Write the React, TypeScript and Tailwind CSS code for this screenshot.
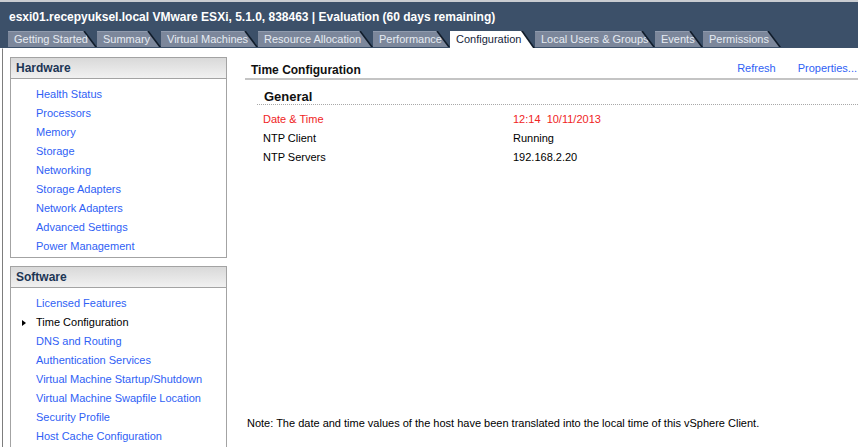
// vSphere Client — host Configuration tab, Time Configuration page

const TABS = [
  { label: "Getting Started", w: "w-[89px]", inner: "w-[87px]" },
  { label: "Summary", w: "w-[64px]", inner: "w-[62px]" },
  { label: "Virtual Machines", w: "w-[97px]", inner: "w-[95px]" },
  { label: "Resource Allocation", w: "w-[115px]", inner: "w-[113px]" },
  { label: "Performance", w: "w-[77px]", inner: "w-[75px]" },
  { label: "Configuration", w: "w-[85px]", inner: "w-[83px]", active: true },
  { label: "Local Users & Groups", w: "w-[120px]", inner: "w-[118px]" },
  { label: "Events", w: "w-[48px]", inner: "w-[46px]" },
  { label: "Permissions", w: "w-[78px]", inner: "w-[76px]" },
];

const HARDWARE = [
  "Health Status",
  "Processors",
  "Memory",
  "Storage",
  "Networking",
  "Storage Adapters",
  "Network Adapters",
  "Advanced Settings",
  "Power Management",
];

const SOFTWARE = [
  "Licensed Features",
  "Time Configuration",
  "DNS and Routing",
  "Authentication Services",
  "Virtual Machine Startup/Shutdown",
  "Virtual Machine Swapfile Location",
  "Security Profile",
  "Host Cache Configuration",
];

const ROWS = [
  { label: "Date & Time", value: "12:14  10/11/2013", red: true },
  { label: "NTP Client", value: "Running" },
  { label: "NTP Servers", value: "192.168.2.20" },
];

function Tab({ label, w, inner, active }: { label: string; w: string; inner: string; active?: boolean }) {
  return (
    <div
      className={`${w} ${active ? "h-[17px]" : "h-[16px] self-start"} shrink-0 bg-[#101c2a] [clip-path:polygon(0_0,calc(100%-12px)_0,100%_100%,0_100%)]`}
    >
      <div
        className={`${inner} h-full flex items-center pl-[6px] whitespace-pre [clip-path:polygon(0_0,calc(100%-12px)_0,100%_100%,0_100%)] ${
          active ? "bg-white text-[#14243a]" : "bg-[#7c879b] text-[#e6ebf2] border-t border-[#8f9aad]"
        }`}
      >
        {label}
      </div>
    </div>
  );
}

function SideBox({ title, items, selected }: { title: string; items: string[]; selected?: string }) {
  return (
    <div className="w-[217px] border border-[#a3a3a3] bg-white">
      <div className="h-[21px] flex items-center pl-[5px] border-b border-[#a3a3a3] bg-gradient-to-b from-[#d9d9d9] to-[#f1f1f1] font-bold text-[12px] text-[#1c3554]">
        {title}
      </div>
      <ul className="pt-[6px] pb-[1px]">
        {items.map((it) => (
          <li key={it} className="relative h-[19px] flex items-center pl-[25px] whitespace-nowrap">
            {it === selected && (
              <span className="absolute left-[11px] top-[7px] w-0 h-0 border-y-[3px] border-y-transparent border-l-[4px] border-l-black" />
            )}
            <span className={it === selected ? "text-black" : "text-[#2f5ff5]"}>{it}</span>
          </li>
        ))}
      </ul>
    </div>
  );
}

export default function App() {
  return (
    <div className="w-[858px] h-[447px] overflow-hidden bg-white font-['Liberation_Sans',Arial,sans-serif] text-[11px] text-black">
      {/* ── title bar + tabs ── */}
      <div className="h-[2px] bg-[#c9ccd1]" />
      <div className="h-[46px] bg-[#3c5069] flex flex-col">
        <div className="h-[29px] flex items-center pl-[9px] pt-[1px] font-bold text-[12px] text-white whitespace-nowrap">
          esxi01.recepyuksel.local VMware ESXi, 5.1.0, 838463 | Evaluation (60 days remaining)
        </div>
        <div className="h-[17px] flex items-end pl-[8px] text-[11px]">
          {TABS.map((t) => (
            <Tab key={t.label} {...t} />
          ))}
        </div>
      </div>

      {/* ── body ── */}
      <div className="h-[399px] flex ml-[2px] border-l border-[#7d7d7d] border-t border-t-white">
        <div className="shrink-0 pl-[7px] pt-[8px] flex flex-col gap-[8px]">
          <SideBox title="Hardware" items={HARDWARE} />
          <SideBox title="Software" items={SOFTWARE} selected="Time Configuration" />
        </div>

        <div className="flex-1 flex flex-col pl-[18px]">
          <div className="mt-[12px] h-[19px] flex items-center border-b-2 border-[#c4c4c4]">
            <span className="pl-[6px] font-bold text-[12px] text-[#111]">Time Configuration</span>
            <span className="ml-auto text-[#2f5ff5] -mt-[3px]">Refresh</span>
            <span className="ml-[22px] mr-[1px] text-[#2f5ff5] -mt-[3px]">Properties...</span>
          </div>

          <div className="ml-[12px]">
            <div className="h-[25px] flex items-end pl-[7px] border-b border-dotted border-[#a8a8a8] font-bold text-[13px] leading-[15px] text-[#111]">
              General
            </div>
            <div className="pt-[5px]">
              {ROWS.map((r) => (
                <div key={r.label} className={`h-[19px] flex items-center pl-[6px] ${r.red ? "text-[#f02424]" : "text-black"}`}>
                  <span className="w-[250px] shrink-0">{r.label}</span>
                  <span className="whitespace-pre">{r.value}</span>
                </div>
              ))}
            </div>
          </div>

          <div className="mt-auto mb-[14px] h-[19px] flex items-center pl-[2px] whitespace-nowrap">
            Note: The date and time values of the host have been translated into the local time of this vSphere Client.
          </div>
        </div>
      </div>
    </div>
  );
}
